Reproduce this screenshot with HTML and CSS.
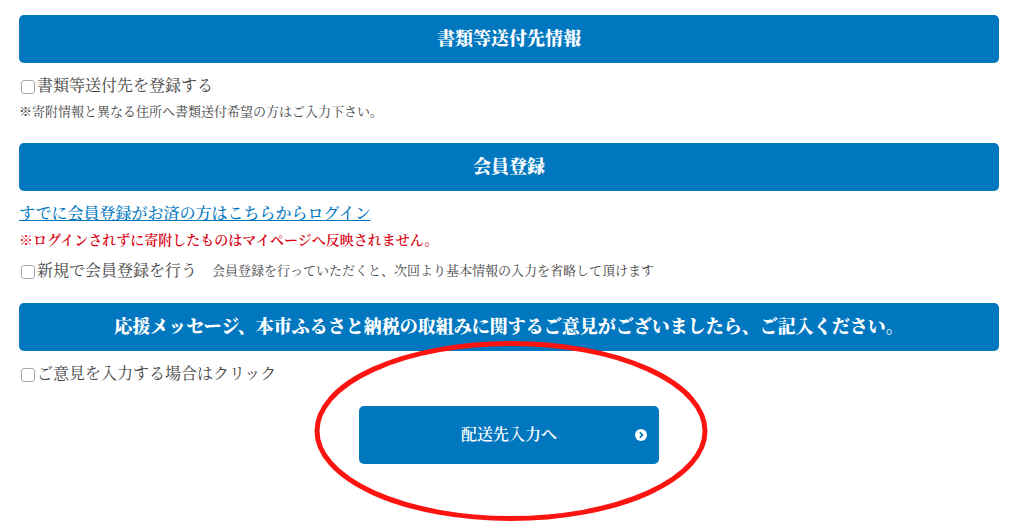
FILE: index.html
```html
<!DOCTYPE html>
<html lang="ja">
<head>
<meta charset="utf-8">
<title>寄附申込み</title>
<link rel="stylesheet" href="styles.css">
</head>
<body>
<form class="page">
  <section class="section">
    <h2 class="heading">書類等送付先情報</h2>
    <label class="check"><input class="box" type="checkbox">書類等送付先を登録する</label>
    <p class="note">※寄附情報と異なる住所へ書類送付希望の方はご入力下さい。</p>
  </section>
  <section class="section">
    <h2 class="heading">会員登録</h2>
    <a class="login" href="#">すでに会員登録がお済の方はこちらからログイン</a>
    <p class="warning">※ログインされずに寄附したものはマイページへ反映されません。</p>
    <div class="row">
      <label class="check"><input class="box" type="checkbox">新規で会員登録を行う</label>
      <span class="hint">会員登録を行っていただくと、次回より基本情報の入力を省略して頂けます</span>
    </div>
  </section>
  <section class="section">
    <h2 class="heading">応援メッセージ、本市ふるさと納税の取組みに関するご意見がございましたら、ご記入ください。</h2>
    <label class="check"><input class="box" type="checkbox">ご意見を入力する場合はクリック</label>
  </section>
  <div class="actions">
    <button class="submit" type="button">配送先入力へ
      <svg class="arrow" viewBox="0 0 12 12" aria-hidden="true"><circle cx="6" cy="6" r="6" fill="#fff"/><path d="M4.8 3.4 7.4 6 4.8 8.6" fill="none" stroke="#0077bf" stroke-width="1.7"/></svg>
    </button>
    <svg class="mark" viewBox="0 0 394 182" aria-hidden="true"><ellipse cx="197" cy="91" rx="194" ry="87.5" fill="none" stroke="#fb1410" stroke-width="5"/></svg>
  </div>
</form>
</body>
</html>
```
FILE: styles.css
```css
* {
  box-sizing: border-box;
}
body {
  margin: 0;
  background: #fff;
  color: #444;
  font-family: "Liberation Serif", "Noto Serif CJK JP", "Noto Sans CJK JP", serif;
  font-size: 16px;
  line-height: 26px;
}
.page {
  display: flex;
  flex-direction: column;
  gap: 19px;
  padding: 15px 24px 64px 19px;
}
.section {
  display: flex;
  flex-direction: column;
  align-items: flex-start;
}
.heading {
  width: 100%;
  margin: 0 0 10px;
  padding: 12px;
  border-radius: 5px;
  background: #0077bf;
  color: #fff;
  font-size: 18px;
  font-weight: 900;
  line-height: 24px;
  text-align: center;
}
.check {
  display: flex;
  align-items: center;
}
.box {
  appearance: none;
  width: 14px;
  height: 14px;
  margin: 2px 2px 0;
  border: 1px solid #aaa;
  border-radius: 3px;
  background: #fff;
}
.box:checked {
  background: #0077bf;
}
.note {
  margin: 1px 0 0;
  font-size: 13px;
  line-height: 24px;
}
.login {
  color: #0077bf;
  font-weight: 500;
  text-underline-offset: 1px;
}
.warning {
  margin: 2px 0 5px;
  color: #d7000f;
  font-size: 14px;
  font-weight: 600;
  line-height: 24px;
}
.row {
  display: flex;
  flex-wrap: wrap;
  align-items: center;
  column-gap: 15px;
}
.hint {
  font-size: 13px;
}
.actions {
  position: relative;
  display: flex;
  justify-content: center;
}
.submit {
  position: relative;
  width: 300px;
  padding: 16px 32px;
  border: 0;
  border-radius: 5px;
  background: #0077bf;
  color: #fff;
  font: inherit;
  font-weight: 600;
}
.arrow {
  position: absolute;
  top: 23px;
  right: 12px;
  width: 12px;
  height: 12px;
}
.mark {
  position: absolute;
  top: -66px;
  left: calc(50% - 195px);
  width: 394px;
  height: 182px;
  pointer-events: none;
}
```
